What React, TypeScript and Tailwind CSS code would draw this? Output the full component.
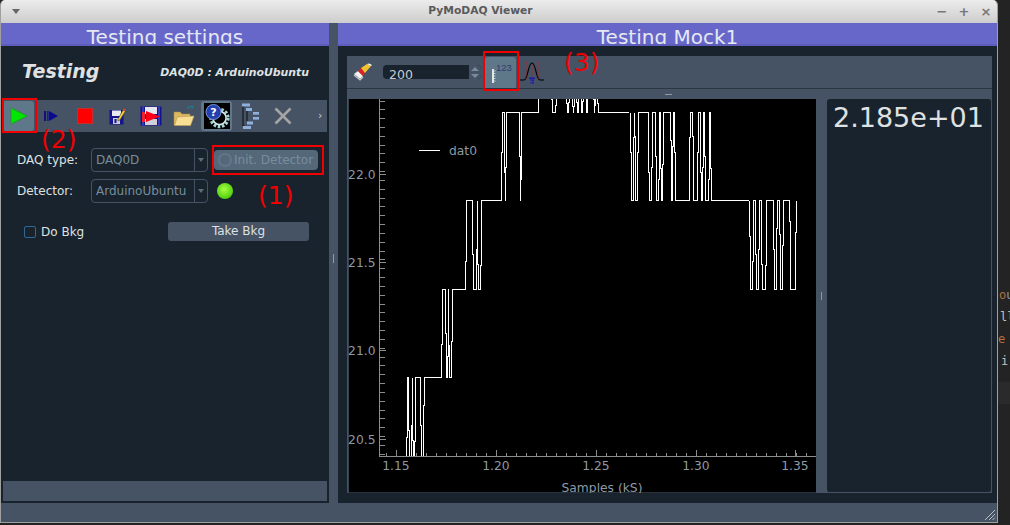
import React from 'react';

const FONT = "font-['DejaVu_Sans',sans-serif]";

// jog offsets so the vertical edges of the trace look like the sampled noise
const JOGS = [0.32, 0.61, 0.45, 0.72, 0.27, 0.55, 0.68, 0.38, 0.5, 0.24, 0.64, 0.41];

let jogIndex = 0;
const stepTrace = (startY: number, otherY: number, stops: number[], endX?: number) => {
  let y = startY;
  let d = `M${stops[0]} ${y}`;
  stops.forEach((x) => {
    const next = y === startY ? otherY : startY;
    const f = JOGS[jogIndex++ % JOGS.length];
    const mid = y + (next - y) * f;
    d += ` H${x} V${mid} H${x + 1} V${next}`;
    y = next;
  });
  if (endX) d += ` H${endX}`;
  return d;
};

const TRACES = [
  stepTrace(465, 377.5, [406, 408, 411, 412, 414, 420, 423], 441),
  stepTrace(377.5, 289.5, [441, 445, 447, 448.5, 451], 465),
  stepTrace(289.5, 200.5, [465, 472, 476, 477, 480], 501),
  stepTrace(200.5, 112.5, [501.5, 504, 505, 519, 520.5], 538),
  stepTrace(112.5, 90, [538, 551.5, 555, 566, 568, 572, 573, 576, 578, 580, 582.5, 585, 587.5, 593, 594, 597], 629),
  stepTrace(112.5, 200.5, [630, 633, 634, 637, 648, 651, 655, 658, 660, 662, 670, 672, 674], 689),
  stepTrace(200.5, 112.5, [689, 692, 697, 700, 702, 704, 708, 710], 749),
  stepTrace(200.5, 289.5, [749, 752, 755, 758, 761, 765, 773, 776, 779, 782, 789, 795.5]),
];

const Y_TICKS = Array.from({ length: 41 }, (_, i) => 100.5 + i * 8.83).filter((y) => y < 456);
const X_TICKS = Array.from({ length: 43 }, (_, i) => 396 + (i - 1) * 10).filter((x) => x > 380 && x < 816);

const Chart = () => (
  <svg viewBox="348 99 468 394" className="w-[468px] h-[394px] block bg-black">
    <defs>
      <clipPath id="plotArea">
        <rect x="380" y="99" width="436" height="357" />
      </clipPath>
    </defs>
    <rect x="348" y="99" width="0.8" height="394" fill="#455364" />
    <rect x="348" y="492.4" width="468" height="0.8" fill="#455364" />
    <g stroke="#8c8c8c" strokeWidth="1" shapeRendering="crispEdges">
      <line x1="379.5" y1="99" x2="379.5" y2="456.5" />
      <line x1="379.5" y1="456.5" x2="816" y2="456.5" />
      {Y_TICKS.map((y, i) => (
        <line key={i} x1="380" y1={Math.round(y) + 0.5} x2="385" y2={Math.round(y) + 0.5} />
      ))}
      {[174, 262, 350, 439].map((y) => (
        <line key={y} x1="380" y1={y + 0.5} x2="386" y2={y + 0.5} />
      ))}
      {X_TICKS.map((x) => (
        <line key={x} x1={x + 0.5} y1="456" x2={x + 0.5} y2="453" />
      ))}
      {[396, 496, 596, 696, 795].map((x) => (
        <line key={x} x1={x + 0.5} y1="456" x2={x + 0.5} y2="450" />
      ))}
    </g>
    <g fill="none" stroke="#fff" strokeWidth="1" shapeRendering="crispEdges" clipPath="url(#plotArea)">
      {TRACES.map((d, i) => (
        <path key={i} d={d} />
      ))}
      <line x1="419" y1="150.5" x2="440" y2="150.5" />
    </g>
    <g fill="#8d9aa5" fontSize="12.3" fontFamily="'DejaVu Sans', sans-serif">
      <text x="449" y="155">dat0</text>
      {[
        ['22.0', 179],
        ['21.5', 267],
        ['21.0', 355],
        ['20.5', 444],
      ].map(([t, y]) => (
        <text key={t} x="375.5" y={y} textAnchor="end">{t}</text>
      ))}
      {[
        ['1.15', 396],
        ['1.20', 496],
        ['1.25', 596],
        ['1.30', 696],
        ['1.35', 795],
      ].map(([t, x]) => (
        <text key={t} x={x} y="470" textAnchor="middle">{t}</text>
      ))}
      <text x="602" y="492" textAnchor="middle">Samples (kS)</text>
    </g>
  </svg>
);

const PlayIcon = () => (
  <svg width="18" height="18" viewBox="0 0 18 18">
    <path d="M1 1 L17 9 L1 17 Z" fill="#00e600" stroke="#0a9a0a" strokeWidth="0.6" />
  </svg>
);

const StepIcon = () => (
  <svg width="15" height="12" viewBox="0 0 15 12">
    <rect x="0" y="1" width="2" height="10" fill="#10107f" />
    <rect x="3" y="1" width="1.6" height="10" fill="#1a1aa0" />
    <path d="M5 1 L14 6 L5 11 Z" fill="#0b0b8a" />
  </svg>
);

const StopIcon = () => <div className="w-[16px] h-[16px] bg-[#ff0000] border border-[#c43030]" />;

const FloppyIcon = () => (
  <svg width="17" height="17" viewBox="0 0 17 17">
    <rect x="0.5" y="2" width="14" height="14.5" fill="#14148c" />
    <rect x="3" y="2.5" width="9" height="5.5" fill="#e8e8ee" />
    <rect x="4" y="10" width="7" height="6" fill="#c9cbdc" />
    <rect x="5.5" y="11" width="2" height="4" fill="#14148c" />
    <path d="M9 11 L14 2 L16.5 3 L11 12 L9 13 Z" fill="#f4d23a" stroke="#222" strokeWidth="0.5" />
    <path d="M14 2 L15 0.5 L16.8 1.4 L16.5 3 Z" fill="#d94a3a" />
  </svg>
);

const FloppyPlayIcon = () => (
  <svg width="22" height="20" viewBox="0 0 22 20">
    <rect x="0.5" y="0.5" width="21" height="19" fill="#14148c" />
    <rect x="2" y="0.5" width="2" height="19" fill="#3a3ab0" />
    <rect x="18" y="0.5" width="2" height="19" fill="#3a3ab0" />
    <rect x="5" y="1" width="12" height="7" fill="#e6e6ee" />
    <rect x="5" y="13" width="12" height="6" fill="#cfd0dc" />
    <rect x="2" y="6" width="3" height="10" fill="#f02030" />
    <path d="M6 5 L20 10.5 L6 16 Z" fill="#ff0018" />
  </svg>
);

const FolderIcon = () => (
  <svg width="22" height="22" viewBox="0 0 22 22">
    <path d="M14 4 C16 1 18 1 20 2" fill="none" stroke="#1d7f8c" strokeWidth="1.2" />
    <path d="M18.5 0.5 L21 2.5 L18.5 4" fill="#1d7f8c" />
    <path d="M1 7 L7 7 L9 9 L17 9 L17 12 L5 12 L2 20 L1 20 Z" fill="#d9b860" stroke="#a98c3e" strokeWidth="0.5" />
    <path d="M4.5 12 L21 11 L17.5 20.5 L1.5 20.5 Z" fill="#f7df94" stroke="#c4a659" strokeWidth="0.6" />
  </svg>
);

const GearIcon = () => (
  <svg width="26" height="26" viewBox="0 0 26 26">
    <rect width="26" height="26" fill="#000" />
    <g fill="none" stroke="#a5d2d2" strokeWidth="3.2" strokeDasharray="2.6 1.6">
      <circle cx="15.5" cy="15" r="8.6" />
    </g>
    <circle cx="15.5" cy="15" r="6.6" fill="none" stroke="#cfe4e4" strokeWidth="1.6" />
    <circle cx="9.5" cy="9" r="7.5" fill="#2340b0" stroke="#8093d8" strokeWidth="1" />
    <text x="9.5" y="13" textAnchor="middle" fontSize="11" fontWeight="700" fill="#fff" fontFamily="'DejaVu Sans', sans-serif">?</text>
  </svg>
);

const TreeIcon = () => (
  <svg width="20" height="26" viewBox="0 0 20 26">
    <path d="M3 3 V23 M3 3 H5 M3 23 H5 M7 8 V18" stroke="#14181c" strokeWidth="1.2" fill="none" />
    <rect x="2" y="0.5" width="8" height="3" fill="#8fb0dc" />
    <rect x="6" y="5" width="6" height="3" fill="#8fb0dc" />
    <rect x="13" y="9" width="6" height="2.6" fill="#8fb0dc" />
    <rect x="13" y="14" width="6" height="2.6" fill="#8fb0dc" />
    <rect x="7" y="18.5" width="6" height="3" fill="#8fb0dc" />
    <rect x="3" y="23" width="8" height="3" fill="#8fb0dc" />
  </svg>
);

const CrossIcon = () => (
  <svg width="18" height="18" viewBox="0 0 18 18">
    <path d="M1.5 1.5 L16.5 16.5 M16.5 1.5 L1.5 16.5" stroke="#a4a4a4" strokeWidth="2.6" />
  </svg>
);

const EraserIcon = () => (
  <svg width="20" height="18" viewBox="0 0 20 18">
    <path d="M1 11 L5 8 L10 13 L7 16 Z" fill="#f4f4f4" stroke="#999" strokeWidth="0.5" />
    <path d="M5 8 L8 5 L12 10 L10 13 Z" fill="#e02020" />
    <path d="M8 5 L14 1 L18 3 L12 10 Z" fill="#f2c230" />
    <path d="M14 1 L16 0.5 L19 2 L18 3 Z" fill="#fff" />
    <path d="M1 12 L7 17 L10 14" fill="none" stroke="#c8c8c8" strokeWidth="1.2" />
  </svg>
);

const RulerIcon = () => (
  <svg width="24" height="24" viewBox="0 0 24 24">
    <path d="M4 8 V22" stroke="#fff" strokeWidth="1.6" />
    <path d="M4.5 10 H6.5 M4.5 12.5 H6.5 M4.5 15 H6.5 M4.5 17.5 H6.5 M4.5 20 H6.5" stroke="#fff" strokeWidth="0.6" />
    <text x="7" y="10" fontSize="9.5" fill="#2f3c6e" fontFamily="'Liberation Sans', sans-serif">123</text>
  </svg>
);

const GaussIcon = () => (
  <svg width="26" height="24" viewBox="0 0 26 24">
    <path d="M1 20 H5 C9 20 9 3 13 3 C17 3 17 20 21 20 H25" fill="none" stroke="#000" strokeWidth="1.1" />
    <path d="M7 2 V19 M19 2 V19" stroke="#e01010" strokeWidth="0.8" strokeDasharray="2 1.2" />
    <path d="M13 4 V17" stroke="#e01010" strokeWidth="0.7" strokeDasharray="2 1.2" />
    <rect x="10" y="17.5" width="6" height="1.4" fill="#1a1ab0" />
    <path d="M11 20 H15 L13 21.5 L15 23 H11" fill="none" stroke="#1a1ab0" strokeWidth="1" />
  </svg>
);

const ToolButton = ({ children, active }: { children: React.ReactNode; active?: boolean }) => (
  <div
    className={`w-[31px] h-[30px] shrink-0 flex items-center justify-center rounded-[3px] ${
      active ? 'bg-[#5f7889]' : ''
    }`}
  >
    {children}
  </div>
);

const Combo = ({ value }: { value: string }) => (
  <div className="w-[117px] h-[24px] flex items-center border border-[#455364] rounded-[4px] text-[#788d9c] text-[12px]">
    <span className="flex-1 pl-[4px] overflow-hidden whitespace-nowrap">{value}</span>
    <div className="w-[13px] h-full border-l border-[#455364] flex items-center justify-center">
      <div className="w-0 h-0 border-x-[3.5px] border-x-transparent border-t-[4px] border-t-[#5d6d7b]" />
    </div>
  </div>
);

const PanelTitle = ({ text }: { text: string }) => (
  <div className="h-[23px] shrink-0 bg-[#6767ca] border-b-2 border-[#5d5dbb] overflow-hidden text-center text-[#e6e8f2] text-[20px] leading-[28px]">
    {text}
  </div>
);

const SettingsPanel = () => (
  <div className="w-[328px] h-full shrink-0 bg-[#19232d] flex flex-col rounded-tl-[2px]">
    <PanelTitle text="Testing settings" />
    <div className="h-[54px] shrink-0 flex items-center pl-[21px] pr-[20px] justify-between italic font-bold text-[#dfe1e2]">
      <span className="text-[19px] mb-[3px]">Testing</span>
      <span className="text-[10.9px]">DAQ0D : ArduinoUbuntu</span>
    </div>
    <div className="h-[32px] mx-[2px] shrink-0 bg-[#455364] flex items-center gap-[2px]">
      <ToolButton active><PlayIcon /></ToolButton>
      <ToolButton><StepIcon /></ToolButton>
      <ToolButton><StopIcon /></ToolButton>
      <ToolButton><FloppyIcon /></ToolButton>
      <ToolButton><FloppyPlayIcon /></ToolButton>
      <ToolButton><FolderIcon /></ToolButton>
      <ToolButton active><GearIcon /></ToolButton>
      <ToolButton><TreeIcon /></ToolButton>
      <ToolButton><CrossIcon /></ToolButton>
      <span className="ml-[18px] text-[#c9ced3] text-[11px]">›</span>
    </div>
    <div className="flex items-center h-[24px] mt-[16px] pl-[16px] text-[12px] text-[#dfe1e2]">
      <span className="w-[74px]">DAQ type:</span>
      <Combo value="DAQ0D" />
      <div className="ml-[6px] w-[104px] h-[20px] rounded-[4px] bg-[#54687a] flex items-center pl-[4px] text-[#788d9c]">
        <div className="w-[14px] h-[14px] rounded-full border-2 border-[#62768a] mr-[2px]" />
        <span className="whitespace-nowrap text-[12px]">Init. Detector</span>
      </div>
    </div>
    <div className="flex items-center h-[24px] mt-[7px] pl-[16px] text-[12px] text-[#dfe1e2]">
      <span className="w-[74px]">Detector:</span>
      <Combo value="ArduinoUbuntu" />
      <div className="ml-[9px] w-[16px] h-[16px] rounded-full bg-[radial-gradient(circle_at_45%_40%,#a8ff40,#50d010_70%,#3a9a10)]" />
    </div>
    <div className="flex items-center h-[20px] mt-[18px] pl-[23px] text-[12px] text-[#dfe1e2]">
      <div className="w-[12px] h-[12px] mt-[2px] border border-[#346792] rounded-[2px]" />
      <span className="ml-[5px] w-[127px] mt-[2px]">Do Bkg</span>
      <div className="w-[141px] h-[19px] bg-[#455364] rounded-[3px] flex items-center justify-center">Take Bkg</div>
    </div>
    <div className="flex-1" />
    <div className="h-[20px] mx-[2px] mb-[2px] shrink-0 bg-[#455364]" />
  </div>
);

const ViewerPanel = () => (
  <div className="flex-1 h-full bg-[#19232d] flex flex-col">
    <PanelTitle text="Testing Mock1" />
    <div className="flex-1 flex flex-col pl-[9px] pr-[5px] pt-[10px] pb-[10px]">
      <div className="h-[32px] shrink-0 bg-[#455364] flex items-center">
        <div className="ml-[6px] w-[20px] flex justify-center"><EraserIcon /></div>
        <div className="ml-[10px] w-[98px] h-[14px] bg-[#19232d] rounded-[4px] flex overflow-hidden">
          <span className="flex-1 pl-[6px] text-[12.5px] leading-[20px] text-[#c6ccd1]">200</span>
          <div className="w-[13px] bg-[#455364] border-l border-[#19232d] flex flex-col items-center justify-around">
            <div className="w-0 h-0 border-x-[4px] border-x-transparent border-b-[4px] border-b-[#788d9c]" />
            <div className="w-0 h-0 border-x-[4px] border-x-transparent border-t-[4px] border-t-[#788d9c]" />
          </div>
        </div>
        <div className="ml-[4px] w-[31px] h-[32px] mt-[1px] bg-[#5f7889] rounded-[3px] flex items-center justify-center"><RulerIcon /></div>
        <div className="ml-[3px]"><GaussIcon /></div>
      </div>
      <div className="h-[1px] shrink-0 bg-[#2a3642]" />
      <div className="h-[10px] shrink-0 bg-[#455364] flex items-center justify-center pr-[2px]">
        <div className="w-[7px] h-[1px] bg-[#8d9aa5]" />
      </div>
      <div className="flex-1 flex bg-[#455364] min-h-0">
        <div className="ml-[1px]"><Chart /></div>
        <div className="w-[11px] flex items-center justify-center">
          <div className="w-[1px] h-[8px] bg-[#8d9aa5]" />
        </div>
        <div className="flex-1 bg-[#19232d] rounded-[3px] border-b border-r border-[#455364] pl-[6px] pt-[1px] text-[#dfe1e2] text-[27px] leading-[35px]">
          2.185e+01
        </div>
      </div>
    </div>
  </div>
);

const Annotations = () => (
  <>
    <div className="absolute left-[2px] top-[98px] w-[35px] h-[35px] border-2 border-[#f00000]" />
    <div className="absolute left-[212px] top-[145px] w-[112px] h-[30px] border-2 border-[#f00000]" />
    <div className="absolute left-[483px] top-[51px] w-[36px] h-[40px] border-2 border-[#f00000]" />
    <span className="absolute left-[41px] top-[121px] text-[25px] text-[#f00000]">(2)</span>
    <span className="absolute left-[258px] top-[177px] text-[25px] text-[#f00000]">(1)</span>
    <span className="absolute left-[564px] top-[44px] text-[25px] text-[#f00000]">(3)</span>
  </>
);

export default function App() {
  return (
    <div className={`relative w-[1010px] h-[525px] bg-[#232323] flex overflow-hidden ${FONT}`}>
      <div className="w-[998px] h-[523px] shrink-0 flex flex-col border-x border-b border-[#a0a0a0] rounded-t-[5px] overflow-hidden bg-[#455364]">
        <div className="h-[23px] shrink-0 bg-gradient-to-b from-[#ececec] to-[#cdcdcd] flex items-center text-[#5a5a5a]">
          <div className="ml-[11px] w-0 h-0 border-x-[4px] border-x-transparent border-t-[5px] border-t-[#666]" />
          <span className="flex-1 text-center font-bold text-[10.7px] pl-[10px]">PyMoDAQ Viewer</span>
          <div className="flex items-center text-[#777] font-bold text-[13px] leading-none text-center">
            <span className="w-[22px]">−</span>
            <span className="w-[22px]">+</span>
            <span className="w-[22px]">×</span>
          </div>
        </div>
        <div className="h-[480px] shrink-0 flex">
          <SettingsPanel />
          <div className="w-[9px] shrink-0 flex items-center justify-center">
            <div className="w-[1px] h-[9px] bg-[#8d9aa5] mt-[-10px]" />
          </div>
          <ViewerPanel />
        </div>
        <div className="flex-1 flex justify-end items-end">
          <svg width="12" height="12" viewBox="0 0 12 12" className="mr-[1px] mb-[1px]">
            <path d="M1 11 L11 1 M5 11 L11 5 M8.5 11 L11 8.5" stroke="#b8bec4" strokeWidth="1" />
          </svg>
        </div>
      </div>
      <div className="flex-1 flex flex-col pt-[284px] text-[12px] leading-[22px] font-['DejaVu_Sans_Mono',monospace] overflow-hidden whitespace-nowrap">
        <span className="text-[#7f9fc0] pl-[1px]"><span className="text-[#b07040]">o</span>u</span>
        <span className="text-[#c0c0c0] pl-[2px]">ll</span>
        <span className="text-[#b07040]">e</span>
        <span className="text-[#c0c0c0] pl-[3px]">i</span>
        <div className="h-[22px] mt-[10px] bg-[#2a2a2a]" />
      </div>
      <Annotations />
    </div>
  );
}
